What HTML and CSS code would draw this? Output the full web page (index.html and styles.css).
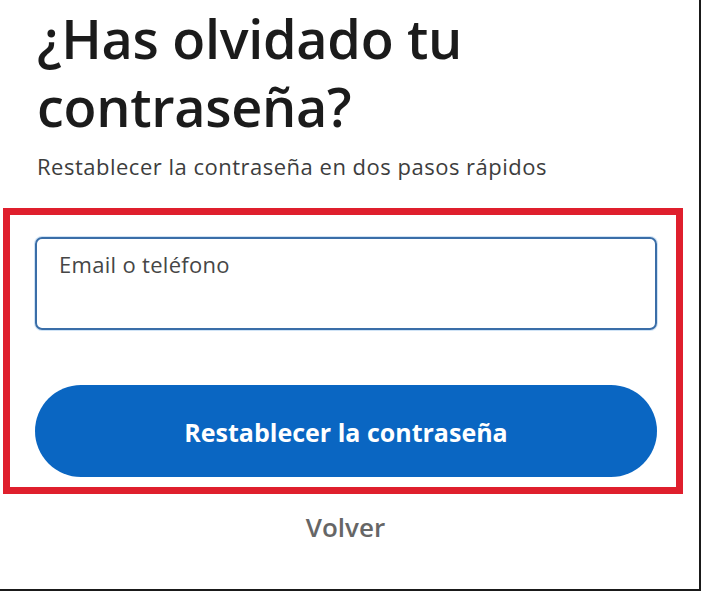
FILE: index.html
```html
<!DOCTYPE html>
<html lang="es">
<head>
<meta charset="utf-8">
<title>¿Has olvidado tu contraseña?</title>
<link rel="stylesheet" href="styles.css">
</head>
<body>
<div class="page">
  <h1 class="title">¿Has olvidado tu contraseña?</h1>
  <p class="subtitle">Restablecer la contraseña en dos pasos rápidos</p>
  <section class="highlight">
    <div class="field">
      <span class="field-label">Email o teléfono</span>
    </div>
    <button class="primary" type="button">Restablecer la contraseña</button>
  </section>
  <div class="back-row"><a class="back" href="#">Volver</a></div>
</div>
</body>
</html>
```

FILE: styles.css
```css
html, body {
  margin: 0;
  padding: 0;
  background: #ffffff;
}

body {
  font-family: "Open Sans", "Noto Sans", "Liberation Sans", sans-serif;
}

.page {
  width: 699px;
  height: 589px;
  border-right: 2px solid #1a1a1a;
  border-bottom: 2px solid #1a1a1a;
  background: #ffffff;
  overflow: hidden;
}

.title {
  margin: 4px 0 0 37px;
  max-width: 480px;
  font-size: 54px;
  line-height: 68px;
  font-weight: 600;
  color: #1b1b1b;
  letter-spacing: -0.3px;
}

.subtitle {
  margin: 12px 0 0 37px;
  font-size: 22px;
  line-height: 28px;
  letter-spacing: 0.5px;
  color: #3d3d3d;
}

.highlight {
  box-sizing: border-box;
  width: 680px;
  margin: 28px 0 0 3px;
  border: 7px solid #df1f2d;
  padding: 22px 19px 10px 25px;
  display: flex;
  flex-direction: column;
  gap: 55px;
}

.field {
  box-sizing: border-box;
  height: 93px;
  border: 2px solid #3a6ea8;
  border-radius: 7px;
  box-shadow: 0 0 0 1px #cfe3f6;
  padding: 11px 22px;
}

.field-label {
  display: block;
  font-size: 22px;
  line-height: 28px;
  letter-spacing: 0.3px;
  color: #464646;
}

.primary {
  height: 92px;
  border: none;
  border-radius: 46px;
  background: #0a66c2;
  color: #ffffff;
  font-family: inherit;
  font-size: 25px;
  font-weight: 700;
  cursor: pointer;
  padding: 2px 0 0;
}

.back-row {
  display: flex;
  justify-content: center;
  margin-top: 16px;
  padding-right: 8px;
}

.back {
  font-size: 26px;
  line-height: 34px;
  color: #666666;
  font-weight: 600;
  text-decoration: none;
}
```
